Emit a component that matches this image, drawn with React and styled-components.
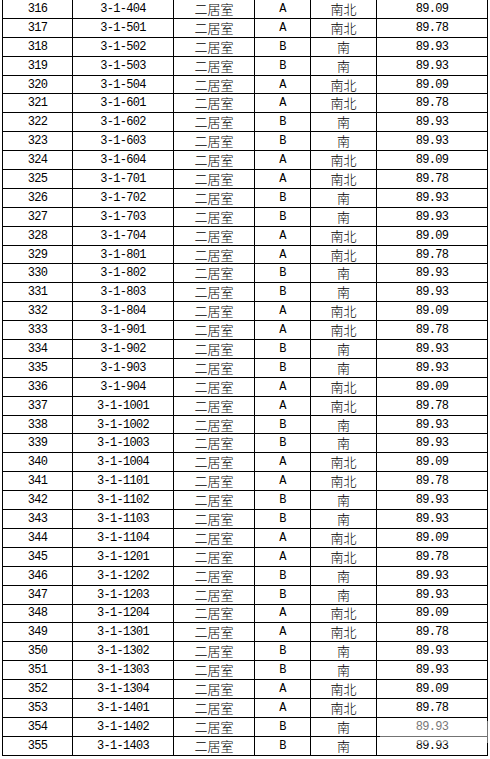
import React from 'react'
import styled, { createGlobalStyle } from 'styled-components'

const GlobalStyle = createGlobalStyle`
    html, body {
        margin: 0;
        padding: 0;
        background: #ffffff;
    }
`;

const Page = styled.div`
    position: relative;
    padding-left: 2px;
    width: 490px;
    height: 759px;
    overflow: hidden;
    box-sizing: border-box;
`;

const Table = styled.table`
    border-collapse: collapse;
    table-layout: fixed;
    width: 486px;
    margin-top: -1px;
`;

const Row = styled.tr`
    height: 18.9px;
`;

const Cell = styled.td`
    border: 1px solid #000;
    padding: 0;
    text-align: center;
    vertical-align: middle;
    color: #000;
    white-space: nowrap;
    line-height: 16px;
    font-family: ${(p) => (p.$cjk ? '"Noto Sans CJK SC", sans-serif' : '"Liberation Mono", monospace')};
    font-size: ${(p) => (p.$cjk ? '13px' : '12px')};
    font-weight: ${(p) => (p.$cjk ? 300 : 400)};
    letter-spacing: ${(p) => (p.$cjk ? '0' : '-0.7px')};
`;

const Watermark = styled.div`
    position: absolute;
    left: 380px;
    top: 721px;
    width: 110px;
    height: 22px;
    background: rgba(255, 255, 255, 0.45);
    pointer-events: none;
`;

const widths = [70, 101, 81, 56, 66, 111];

const units = {
    '01': { type: 'A', dir: '南北', area: '89.78' },
    '02': { type: 'B', dir: '南', area: '89.93' },
    '03': { type: 'B', dir: '南', area: '89.93' },
    '04': { type: 'A', dir: '南北', area: '89.09' },
};

const buildRows = () => {
    const list = ['404'];
    for (let f = 5; f <= 13; f++) {
        ['01', '02', '03', '04'].forEach((u) => list.push(`${f}${u}`));
    }
    ['01', '02', '03'].forEach((u) => list.push(`14${u}`));
    return list.map((room, i) => {
        const u = units[room.slice(-2)];
        return { no: 316 + i, room: `3-1-${room}`, ...u };
    });
};

const rows = buildRows();

const App = () => {
  return (
    <>
        <GlobalStyle />
        <Page>
            <Table>
                <colgroup>
                    {widths.map((w, i) => <col key={i} style={{ width: w }} />)}
                </colgroup>
                <tbody>
                    {rows.map((r) => (
                        <Row key={r.no}>
                            <Cell>{r.no}</Cell>
                            <Cell>{r.room}</Cell>
                            <Cell $cjk>二居室</Cell>
                            <Cell>{r.type}</Cell>
                            <Cell $cjk>{r.dir}</Cell>
                            <Cell>{r.area}</Cell>
                        </Row>
                    ))}
                </tbody>
            </Table>
            <Watermark />
        </Page>
    </>
  )
}

export default App
